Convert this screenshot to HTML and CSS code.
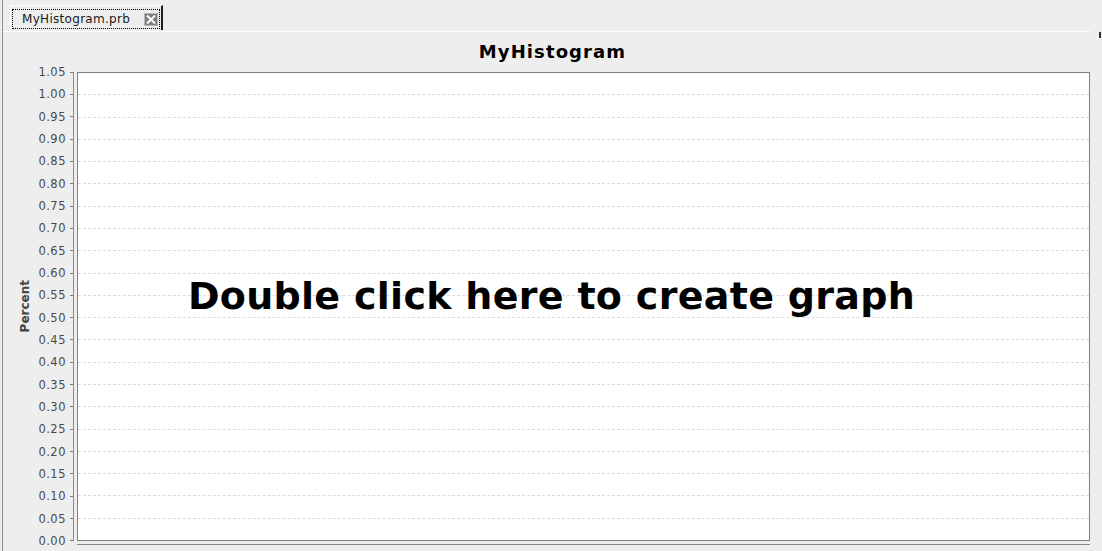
FILE: index.html
```html
<!DOCTYPE html>
<html>
<head>
<meta charset="utf-8">
<link rel="stylesheet" href="styles.css">
</head>
<body>
<div class="window">
  <div class="tabbar">
    <div class="tab">
      <div class="tab-focus">
        <span class="tab-title">MyHistogram.prb</span>
        <svg class="tab-close" width="14" height="13" viewBox="0 0 14 13">
          <rect x="0" y="0" width="14" height="13" fill="#b8b8b8"/>
          <rect x="1" y="1" width="12" height="11" fill="#7e7e7e"/>
          <path d="M3 2.5 L11 10.5 M11 2.5 L3 10.5" stroke="#ffffff" stroke-width="2"/>
        </svg>
      </div>
    </div>
  </div>
  <div class="content">
    <div class="corner-mark"></div>
    <div class="chart-title">MyHistogram</div>
    <div class="chart">
      <div class="ytitle"><span>Percent</span></div>
      <div class="yticks">
        <div class="tick"><span>1.05</span><i></i></div>
        <div class="tick"><span>1.00</span><i></i></div>
        <div class="tick"><span>0.95</span><i></i></div>
        <div class="tick"><span>0.90</span><i></i></div>
        <div class="tick"><span>0.85</span><i></i></div>
        <div class="tick"><span>0.80</span><i></i></div>
        <div class="tick"><span>0.75</span><i></i></div>
        <div class="tick"><span>0.70</span><i></i></div>
        <div class="tick"><span>0.65</span><i></i></div>
        <div class="tick"><span>0.60</span><i></i></div>
        <div class="tick"><span>0.55</span><i></i></div>
        <div class="tick"><span>0.50</span><i></i></div>
        <div class="tick"><span>0.45</span><i></i></div>
        <div class="tick"><span>0.40</span><i></i></div>
        <div class="tick"><span>0.35</span><i></i></div>
        <div class="tick"><span>0.30</span><i></i></div>
        <div class="tick"><span>0.25</span><i></i></div>
        <div class="tick"><span>0.20</span><i></i></div>
        <div class="tick"><span>0.15</span><i></i></div>
        <div class="tick"><span>0.10</span><i></i></div>
        <div class="tick"><span>0.05</span><i></i></div>
        <div class="tick"><span>0.00</span><i></i></div>
      </div>
      <div class="yaxis"></div>
      <div class="plot">
        <div class="grid">
          <div class="gcell"></div><div class="gcell"></div><div class="gcell"></div>
          <div class="gcell"></div><div class="gcell"></div><div class="gcell"></div>
          <div class="gcell"></div><div class="gcell"></div><div class="gcell"></div>
          <div class="gcell"></div><div class="gcell"></div><div class="gcell"></div>
          <div class="gcell"></div><div class="gcell"></div><div class="gcell"></div>
          <div class="gcell"></div><div class="gcell"></div><div class="gcell"></div>
          <div class="gcell"></div><div class="gcell"></div><div class="gcell"></div>
        </div>
        <div class="hint">Double click here to create graph</div>
      </div>
      <div class="xaxis"></div>
    </div>
  </div>
</div>
</body>
</html>
```

FILE: styles.css
```css
html, body {
  margin: 0;
  padding: 0;
  width: 1102px;
  height: 551px;
  overflow: hidden;
  background: #eeeeee;
  font-family: "DejaVu Sans", "Liberation Sans", sans-serif;
}

.window {
  margin-left: 2px;
  height: 551px;
  border-left: 1px solid #8e8e8e;
  box-sizing: border-box;
  display: flex;
  flex-direction: column;
}

.tabbar {
  height: 31px;
  padding-left: 7px;
  padding-top: 5px;
  box-sizing: border-box;
  display: flex;
  align-items: flex-start;
}

.tab {
  height: 25px;
  box-sizing: border-box;
  border-top: 1px solid #ffffff;
  border-left: 1px solid #ffffff;
  border-right: 2px solid #1e1e1e;
  padding: 3px 1px 1px 1px;
  display: flex;
}

.tab-focus {
  border: 1px dotted #000000;
  display: flex;
  align-items: center;
  padding: 0 1px 0 9px;
  gap: 14px;
}

.tab-title {
  font-size: 12px;
  letter-spacing: 0.3px;
  color: #1a1a1a;
}

.tab-close {
  display: block;
}

.content {
  flex: 1;
  border-top: 1px solid #ffffff;
  margin-right: 12px;
  display: flex;
  flex-direction: column;
  position: relative;
}

.corner-mark {
  position: absolute;
  right: -11px;
  top: 0;
  width: 2px;
  height: 6px;
  background: #333333;
}

.chart-title {
  height: 40px;
  display: flex;
  align-items: center;
  justify-content: center;
  font-weight: bold;
  font-size: 18px;
  letter-spacing: 1.1px;
  color: #000000;
  padding-left: 12px;
  padding-bottom: 2px;
  box-sizing: border-box;
}

.chart {
  display: grid;
  grid-template-columns: 34px 36px 1px 3px 1013px;
  grid-template-rows: 469px 3px 1px;
  margin-right: -12px;
}

.ytitle {
  grid-column: 1;
  grid-row: 1;
  display: flex;
  align-items: center;
  justify-content: center;
}

.ytitle span {
  writing-mode: vertical-rl;
  transform: rotate(180deg);
  font-size: 12px;
  font-weight: bold;
  color: #444444;
  margin-left: 9px;
}

.yticks {
  grid-column: 2;
  grid-row: 1;
  margin: -11px 0 -11px 0;
  display: grid;
  grid-template-rows: repeat(22, 1fr);
}

.tick {
  display: flex;
  align-items: center;
  justify-content: flex-end;
  font-size: 11.5px;
  color: #4a4a4a;
  letter-spacing: 0.5px;
}

.tick span {
  margin-right: 4px;
}

.tick i {
  display: block;
  width: 3px;
  height: 1px;
  background: #7a7a7a;
}

.yaxis {
  grid-column: 3;
  grid-row: 1;
  background: #8a8a8a;
}

.plot {
  grid-column: 5;
  grid-row: 1;
  position: relative;
  background: #ffffff;
  border: 1px solid #7f7f7f;
  box-sizing: border-box;
}

.grid {
  height: 100%;
  display: flex;
  flex-direction: column;
}

.gcell {
  flex: 1;
  border-top: 1px dashed #dcdcdc;
}

.gcell:first-child {
  border-top: none;
}

.hint {
  position: absolute;
  left: 0;
  right: 64px;
  top: 201px;
  text-align: center;
  font-size: 38px;
  font-weight: bold;
  color: #000000;
  letter-spacing: 0.3px;
}

.xaxis {
  grid-column: 5;
  grid-row: 3;
  background: #8a8a8a;
}
```
